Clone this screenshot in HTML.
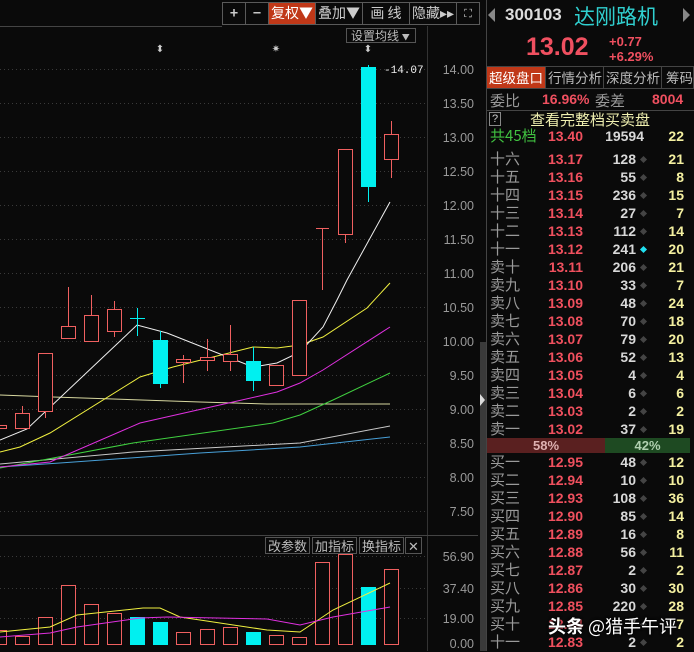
<!DOCTYPE html>
<html><head><meta charset="utf-8"><style>
*{margin:0;padding:0;box-sizing:border-box}
body{width:694px;height:651px;background:#0a0a0a;overflow:hidden;position:relative;font-family:"Liberation Sans","Noto Sans CJK SC",sans-serif;color:#ccc}
.a{position:absolute;white-space:nowrap}
.tb{position:absolute;top:2px;height:23px;border:1px solid #5a5a5a;color:#ccc;font-size:14px;line-height:21px;text-align:center;font-family:"Noto Sans CJK SC",sans-serif;background:#0a0a0a;white-space:nowrap}
.btn{position:absolute;top:537px;height:17px;border:1px solid #555;color:#bbb;font-size:13px;line-height:15px;text-align:center;font-family:"Noto Sans CJK SC",sans-serif}
.row{position:absolute;left:486px;width:208px;height:18px;font-size:14px;line-height:18px}
.row .l{position:absolute;left:4px;color:#9a9a9a;font-family:"Noto Sans CJK SC",sans-serif;font-size:15px}
.row .p{position:absolute;right:111px;color:#f0505e;font-weight:bold}
.row .v{position:absolute;right:58px;color:#d8d8d8;font-weight:bold}
.row .d{position:absolute;left:155px;top:7px;width:5px;height:5px;background:#444;transform:rotate(45deg)}
.row .c{position:absolute;right:10px;color:#f4f0a0;font-weight:bold}
.tab{position:absolute;top:67px;height:21px;font-size:13.5px;line-height:21px;text-align:center;color:#bbb;font-family:"Noto Sans CJK SC",sans-serif;border-right:1px solid #444;white-space:nowrap;overflow:hidden}
</style></head><body>
<svg class="a" style="left:0;top:0" width="480" height="651">
<line x1="0" y1="26.5" x2="222" y2="26.5" stroke="#444"/>
<line x1="427.5" y1="26" x2="427.5" y2="651" stroke="#333"/>
<line x1="0" y1="535.5" x2="478" y2="535.5" stroke="#444"/>
<g stroke="#3a3a3a" stroke-dasharray="1,3">
<line x1="0" y1="69.5" x2="426" y2="69.5"/><line x1="0" y1="103.5" x2="426" y2="103.5"/><line x1="0" y1="137.5" x2="426" y2="137.5"/><line x1="0" y1="171.5" x2="426" y2="171.5"/><line x1="0" y1="205.5" x2="426" y2="205.5"/><line x1="0" y1="239.5" x2="426" y2="239.5"/><line x1="0" y1="273.5" x2="426" y2="273.5"/><line x1="0" y1="307.5" x2="426" y2="307.5"/><line x1="0" y1="341.5" x2="426" y2="341.5"/><line x1="0" y1="375.5" x2="426" y2="375.5"/><line x1="0" y1="409.5" x2="426" y2="409.5"/><line x1="0" y1="443.5" x2="426" y2="443.5"/><line x1="0" y1="477.5" x2="426" y2="477.5"/><line x1="0" y1="511.5" x2="426" y2="511.5"/>
<line x1="0" y1="556.5" x2="426" y2="556.5"/><line x1="0" y1="588.5" x2="426" y2="588.5"/><line x1="0" y1="618.5" x2="426" y2="618.5"/>
</g>
<g fill="none" stroke-width="1">
<polyline stroke="#d8d8a0" points="0,395 53,397 200,402 267,404 390,404"/>
<polyline stroke="#48a0d8" points="0,467 60,463 200,453 300,447 390,437" />
<polyline stroke="#c8c8c8" points="0,464 133,452 300,443 390,426"/>
<polyline stroke="#40d040" points="0,468 133,443 273,423 300,415 333,400 390,373"/>
<polyline stroke="#e030e0" points="0,467 50,462 140,423 233,402 277,392 300,383 323,370 390,327"/>
<polyline stroke="#f0f040" points="0,452 20,447 50,433 140,377 173,367 253,347 277,348 300,345 323,337 367,308 390,283"/>
<polyline stroke="#f0f0f0" points="0,440 27,429 137,325 167,333 253,367 277,363 300,352 323,327 337,300 347,280 390,202"/>
</g>
<g fill="#0a0a0a" stroke="#f06060">
<rect x="-1.5" y="425.5" width="8" height="3"/>
<line x1="22.5" y1="406" x2="22.5" y2="413"/><rect x="15.5" y="413.5" width="14" height="15"/>
<line x1="45.5" y1="411" x2="45.5" y2="418"/><rect x="38.5" y="353.5" width="14" height="58"/>
<line x1="68.5" y1="287" x2="68.5" y2="326"/><rect x="61.5" y="326.5" width="14" height="12"/>
<line x1="91.5" y1="295" x2="91.5" y2="315"/><rect x="84.5" y="315.5" width="14" height="26"/>
<line x1="114.5" y1="301" x2="114.5" y2="337"/><rect x="107.5" y="309.5" width="14" height="22"/>
<line x1="183.5" y1="355" x2="183.5" y2="383"/><rect x="176.5" y="359.5" width="14" height="3"/>
<line x1="207.5" y1="339" x2="207.5" y2="371"/><rect x="200.5" y="357.5" width="14" height="3"/>
<line x1="230.5" y1="325" x2="230.5" y2="371"/><rect x="223.5" y="354.5" width="14" height="7"/>
<rect x="269.5" y="365.5" width="14" height="20"/>
<rect x="292.5" y="300.5" width="14" height="75"/>
<line x1="322.5" y1="228" x2="322.5" y2="290"/><line x1="316" y1="228.5" x2="329" y2="228.5"/>
<line x1="345.5" y1="234" x2="345.5" y2="243"/><rect x="338.5" y="149.5" width="14" height="85"/>
<line x1="391.5" y1="121" x2="391.5" y2="178"/><rect x="384.5" y="134.5" width="14" height="25"/>
</g>
<g fill="#00f0f0" stroke="#00f0f0">
<line x1="137.5" y1="308" x2="137.5" y2="336"/><line x1="130" y1="318.5" x2="145" y2="318.5"/>
<line x1="160.5" y1="331" x2="160.5" y2="388"/><rect x="153.5" y="340.5" width="14" height="43"/>
<line x1="253.5" y1="347" x2="253.5" y2="391"/><rect x="246.5" y="361.5" width="14" height="19"/>
<line x1="368.5" y1="65" x2="368.5" y2="202"/><rect x="361.5" y="67.5" width="14" height="119"/>
</g>
<g fill="#0a0a0a" stroke="#f06060">
<rect x="-1.5" y="630.5" width="8" height="14"/>
<rect x="15.5" y="636.5" width="14" height="8"/>
<rect x="38.5" y="617.5" width="14" height="27"/>
<rect x="61.5" y="585.5" width="14" height="59"/>
<rect x="84.5" y="604.5" width="14" height="40"/>
<rect x="107.5" y="613.5" width="14" height="31"/>
<rect x="176.5" y="632.5" width="14" height="12"/>
<rect x="200.5" y="629.5" width="14" height="15"/>
<rect x="223.5" y="627.5" width="14" height="17"/>
<rect x="269.5" y="635.5" width="14" height="9"/>
<rect x="292.5" y="637.5" width="14" height="7"/>
<rect x="315.5" y="562.5" width="14" height="82"/>
<rect x="338.5" y="554.5" width="14" height="90"/>
<rect x="384.5" y="569.5" width="14" height="75"/>
</g>
<g fill="#00f0f0">
<rect x="130" y="617" width="15" height="28"/><rect x="153" y="622" width="15" height="23"/><rect x="246" y="632" width="15" height="13"/><rect x="361" y="587" width="15" height="58"/>
</g>
<polyline fill="none" stroke="#f0f040" points="0,632 50,627 77,615 143,608 160,608 180,617 267,630 300,632 333,610 390,583"/>
<polyline fill="none" stroke="#e030e0" points="0,637 50,633 77,627 140,618 167,617 267,619 300,625 333,617 390,607"/>
<g fill="#ccc" font-size="10" text-anchor="middle"><text x="160" y="52">⬍</text><text x="276" y="52">✷</text><text x="368" y="52">⬍</text></g>
<text x="384" y="73" fill="#eee" font-size="11" font-family="Liberation Mono">-14.07</text>
<g fill="#999" font-size="12.5" text-anchor="end">
<text x="474" y="74">14.00</text><text x="474" y="108">13.50</text><text x="474" y="142">13.00</text><text x="474" y="176">12.50</text><text x="474" y="210">12.00</text><text x="474" y="244">11.50</text><text x="474" y="278">11.00</text><text x="474" y="312">10.50</text><text x="474" y="346">10.00</text><text x="474" y="380">9.50</text><text x="474" y="414">9.00</text><text x="474" y="448">8.50</text><text x="474" y="482">8.00</text><text x="474" y="516">7.50</text>
<text x="474" y="561">56.90</text><text x="474" y="593">37.40</text><text x="474" y="623">19.00</text><text x="474" y="648">0.00</text>
</g>
</svg>
<div class="tb" style="left:222px;width:24px;font-weight:bold">+</div>
<div class="tb" style="left:245px;width:24px;font-weight:bold">−</div>
<div class="tb" style="left:268px;width:48px;background:#c03818;color:#fff">复权▼</div>
<div class="tb" style="left:315px;width:48px">叠加▼</div>
<div class="tb" style="left:362px;width:48px">画 线</div>
<div class="tb" style="left:409px;width:48px">隐藏▸▸</div>
<div class="tb" style="left:456px;width:24px;font-size:11px">⛶</div>
<div class="a" style="left:346px;top:28px;width:70px;height:15px;border:1px solid #555;font-size:12px;line-height:13px;color:#bbb;padding-left:4px;font-family:'Noto Sans CJK SC',sans-serif">设置均线 <span style="font-size:8px">▼</span></div>
<div class="btn" style="left:265px;width:45px">改参数</div>
<div class="btn" style="left:312px;width:45px">加指标</div>
<div class="btn" style="left:359px;width:45px">换指标</div>
<div class="btn" style="left:405px;width:17px">✕</div>
<div class="a" style="left:480px;top:342px;width:6px;height:309px;background:#3a3a3a"></div>
<div class="a" style="left:480px;top:394px;width:0;height:0;border-top:6px solid transparent;border-bottom:6px solid transparent;border-left:5px solid #ddd"></div>
<div class="a" style="left:486px;top:0;width:1px;height:651px;background:#444"></div>
<div class="a" style="left:488px;top:8px;width:0;height:0;border-top:7px solid transparent;border-bottom:7px solid transparent;border-right:7px solid #888"></div>
<div class="a" style="left:683px;top:8px;width:0;height:0;border-top:7px solid transparent;border-bottom:7px solid transparent;border-left:7px solid #888"></div>
<div class="a" style="left:505px;top:5px;font-size:17px;font-weight:bold;color:#ddd">300103</div>
<div class="a" style="left:574px;top:2px;font-size:21px;color:#30d0d0;font-family:'Noto Sans CJK SC',sans-serif;line-height:28px">达刚路机</div>
<div class="a" style="left:526px;top:33px;font-size:25px;color:#f05060;font-weight:bold">13.02</div>
<div class="a" style="left:609px;top:34px;font-size:13px;font-weight:bold;color:#f05060;line-height:15px">+0.77<br>+6.29%</div>
<div class="a" style="left:487px;top:66px;width:207px;height:1px;background:#444"></div>
<div class="tab" style="left:487px;width:59px;background:#c03818;color:#fff">超级盘口</div>
<div class="tab" style="left:547px;width:57px">行情分析</div>
<div class="tab" style="left:605px;width:57px">深度分析</div>
<div class="tab" style="left:663px;width:31px;text-align:left;padding-left:3px">筹码分</div>
<div class="a" style="left:487px;top:88px;width:207px;height:1px;background:#444"></div>
<div class="a" style="left:490px;top:90px;font-size:15px;color:#999;font-family:'Noto Sans CJK SC',sans-serif">委比</div>
<div class="a" style="left:542px;top:91px;font-size:14px;font-weight:bold;color:#f05060">16.96%</div>
<div class="a" style="left:595px;top:90px;font-size:15px;color:#999;font-family:'Noto Sans CJK SC',sans-serif">委差</div>
<div class="a" style="left:652px;top:91px;font-size:14px;font-weight:bold;color:#f05060">8004</div>
<div class="a" style="left:487px;top:110px;width:207px;height:1px;background:#444"></div>
<div class="a" style="left:489px;top:112px;width:12px;height:14px;border:1px solid #888;font-size:11px;line-height:12px;text-align:center;color:#ccc">?</div>
<div class="a" style="left:530px;top:109px;font-size:15px;color:#f0f0b0;font-family:'Noto Sans CJK SC',sans-serif">查看完整档买卖盘</div>
<div class="row" style="top:127px"><span class="l" style="color:#40c040">共45档</span><span class="p">13.40</span><span class="v" style="right:50px">19594</span><span class="c">22</span></div>
<div class="row" style="top:150px"><span class="l">十六</span><span class="p">13.17</span><span class="v">128</span><i class="d"></i><span class="c">21</span></div>
<div class="row" style="top:168px"><span class="l">十五</span><span class="p">13.16</span><span class="v">55</span><i class="d"></i><span class="c">8</span></div>
<div class="row" style="top:186px"><span class="l">十四</span><span class="p">13.15</span><span class="v">236</span><i class="d"></i><span class="c">15</span></div>
<div class="row" style="top:204px"><span class="l">十三</span><span class="p">13.14</span><span class="v">27</span><i class="d"></i><span class="c">7</span></div>
<div class="row" style="top:222px"><span class="l">十二</span><span class="p">13.13</span><span class="v">112</span><i class="d"></i><span class="c">14</span></div>
<div class="row" style="top:240px"><span class="l">十一</span><span class="p">13.12</span><span class="v">241</span><i class="d" style="background:#20e0f0"></i><span class="c">20</span></div>
<div class="row" style="top:258px"><span class="l">卖十</span><span class="p">13.11</span><span class="v">206</span><i class="d"></i><span class="c">21</span></div>
<div class="row" style="top:276px"><span class="l">卖九</span><span class="p">13.10</span><span class="v">33</span><i class="d"></i><span class="c">7</span></div>
<div class="row" style="top:294px"><span class="l">卖八</span><span class="p">13.09</span><span class="v">48</span><i class="d"></i><span class="c">24</span></div>
<div class="row" style="top:312px"><span class="l">卖七</span><span class="p">13.08</span><span class="v">70</span><i class="d"></i><span class="c">18</span></div>
<div class="row" style="top:330px"><span class="l">卖六</span><span class="p">13.07</span><span class="v">79</span><i class="d"></i><span class="c">20</span></div>
<div class="row" style="top:348px"><span class="l">卖五</span><span class="p">13.06</span><span class="v">52</span><i class="d"></i><span class="c">13</span></div>
<div class="row" style="top:366px"><span class="l">卖四</span><span class="p">13.05</span><span class="v">4</span><i class="d"></i><span class="c">4</span></div>
<div class="row" style="top:384px"><span class="l">卖三</span><span class="p">13.04</span><span class="v">6</span><i class="d"></i><span class="c">6</span></div>
<div class="row" style="top:402px"><span class="l">卖二</span><span class="p">13.03</span><span class="v">2</span><i class="d"></i><span class="c">2</span></div>
<div class="row" style="top:420px"><span class="l">卖一</span><span class="p">13.02</span><span class="v">37</span><i class="d"></i><span class="c">19</span></div>
<div class="a" style="left:487px;top:438px;width:118px;height:15px;background:#5a2020;color:#ddb0b0;font-size:13px;font-weight:bold;line-height:15px;text-align:center">58%</div>
<div class="a" style="left:605px;top:438px;width:85px;height:15px;background:#1e4a22;color:#b0d0b0;font-size:13px;font-weight:bold;line-height:15px;text-align:center">42%</div>
<div class="row" style="top:453px"><span class="l">买一</span><span class="p">12.95</span><span class="v">48</span><i class="d"></i><span class="c">12</span></div>
<div class="row" style="top:471px"><span class="l">买二</span><span class="p">12.94</span><span class="v">10</span><i class="d"></i><span class="c">10</span></div>
<div class="row" style="top:489px"><span class="l">买三</span><span class="p">12.93</span><span class="v">108</span><i class="d"></i><span class="c">36</span></div>
<div class="row" style="top:507px"><span class="l">买四</span><span class="p">12.90</span><span class="v">85</span><i class="d"></i><span class="c">14</span></div>
<div class="row" style="top:525px"><span class="l">买五</span><span class="p">12.89</span><span class="v">16</span><i class="d"></i><span class="c">8</span></div>
<div class="row" style="top:543px"><span class="l">买六</span><span class="p">12.88</span><span class="v">56</span><i class="d"></i><span class="c">11</span></div>
<div class="row" style="top:561px"><span class="l">买七</span><span class="p">12.87</span><span class="v">2</span><i class="d"></i><span class="c">2</span></div>
<div class="row" style="top:579px"><span class="l">买八</span><span class="p">12.86</span><span class="v">30</span><i class="d"></i><span class="c">30</span></div>
<div class="row" style="top:597px"><span class="l">买九</span><span class="p">12.85</span><span class="v">220</span><i class="d"></i><span class="c">28</span></div>
<div class="row" style="top:615px"><span class="l">买十</span><span class="p">12.84</span><span class="v">7</span><i class="d"></i><span class="c">7</span></div>
<div class="row" style="top:633px"><span class="l">十一</span><span class="p">12.83</span><span class="v">2</span><i class="d"></i><span class="c">2</span></div>
<div class="a" style="left:548px;top:613px;font-size:18px;color:#fff;font-family:'Noto Sans CJK SC',sans-serif;text-shadow:0 0 3px #000,0 0 2px #000"><b>头条</b> @猎手午评</div>
</body></html>
